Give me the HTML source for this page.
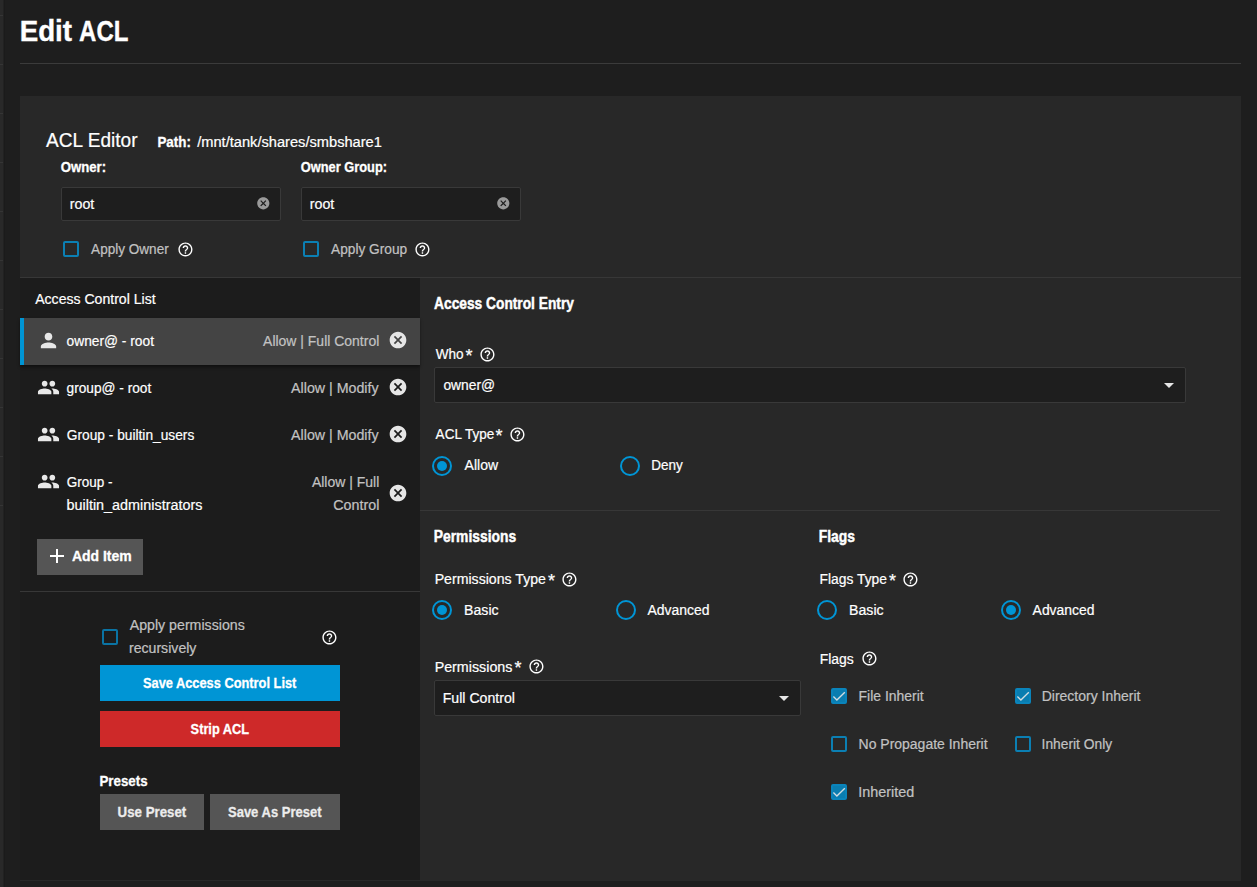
<!DOCTYPE html>
<html>
<head>
<meta charset="utf-8">
<title>Edit ACL</title>
<style>
*{box-sizing:border-box;margin:0;padding:0}
html,body{width:1257px;height:887px;overflow:hidden;background:#1e1e1e}
body{position:relative;font-family:"Liberation Sans",sans-serif;font-size:14px;color:#fff}
.abs{position:absolute}
.t{position:absolute;white-space:nowrap;line-height:1;transform-origin:0 0;-webkit-text-stroke:0.2px currentColor}
.b{font-weight:bold}
.strip{left:0;top:0;width:3px;height:887px;background:#292929;box-shadow:1px 0 0 #222,2px 0 0 #1b1b1b}
.strip i{position:absolute;left:0;width:3px;height:1px;background:#353535}
.card{left:20px;top:96px;width:1221px;height:785px;background:#282828}
.listbg{left:20px;top:278px;width:400px;height:603px;background:#1c1c1c}
.hline{height:1px;background:#373737}
.inp{background:#1e1e1e;border:1px solid #393939;border-radius:2px}
.cb{width:16px;height:16px;border:2px solid #0b7fb3;border-radius:2px}
.cb.on{background:#0a7db0;border-color:#0a84bb}
.radio{width:20px;height:20px;border:2px solid #0095d5;border-radius:50%}
.radio.on::after{content:"";position:absolute;left:3px;top:3px;width:10px;height:10px;border-radius:50%;background:#0095d5}
svg{position:absolute;overflow:visible}
</style>
</head>
<body>
<div class="abs strip"><i style="top:15px"></i><i style="top:64px"></i><i style="top:113px"></i><i style="top:162px"></i><i style="top:211px"></i><i style="top:260px"></i><i style="top:309px"></i><i style="top:358px"></i><i style="top:407px"></i><i style="top:456px"></i><i style="top:505px"></i></div>
<div class="t b" style="left:19px;top:17px;font-size:29px;color:#fff;transform:translateX(0.69px) scaleX(0.9557);-webkit-text-stroke:0.35px #fff">Edit</div>
<div class="t b" style="left:79px;top:17px;font-size:29px;color:#fff;transform:translateX(0.09px) scaleX(0.8272);-webkit-text-stroke:0.35px #fff">ACL</div>
<div class="abs hline" style="left:20px;top:63px;width:1221px;background:#3b3b3b"></div>
<div class="abs card"></div>
<div class="abs listbg"></div>
<div class="abs hline" style="left:20px;top:277px;width:1221px"></div>
<div class="t" style="left:46px;top:131px;font-size:19.5px;color:#fff;transform:translateX(0.10px) scaleX(0.9765)">ACL Editor</div>
<div class="t b" style="left:157px;top:134px;font-size:15px;color:#fff;transform:translateX(0.43px) scaleX(0.8924);-webkit-text-stroke:0.3px #fff">Path:</div>
<div class="t" style="left:197px;top:135px;font-size:14px;color:#fff;transform:translateX(0.20px) scaleX(1.0456)">/mnt/tank/shares/smbshare1</div>
<div class="t b" style="left:60px;top:159px;font-size:15px;color:#fff;transform:translateX(0.65px) scaleX(0.879);-webkit-text-stroke:0.3px #fff">Owner:</div>
<div class="t b" style="left:300px;top:159px;font-size:15px;color:#fff;transform:translateX(0.67px) scaleX(0.8563);-webkit-text-stroke:0.3px #fff">Owner Group:</div>
<div class="abs inp" style="left:61px;top:187px;width:220px;height:34px"></div>
<div class="abs inp" style="left:301px;top:187px;width:220px;height:34px"></div>
<div class="t" style="left:69px;top:197px;font-size:14px;color:#fff;transform:translateX(0.73px) scaleX(1.018)">root</div>
<div class="t" style="left:309px;top:197px;font-size:14px;color:#fff;transform:translateX(0.73px) scaleX(1.018)">root</div>
<svg style="left:256.00px;top:196.40px" width="14.6" height="14.6" viewBox="0 0 24 24"><path fill="#9a9a9a" d="M12 2C6.47 2 2 6.47 2 12s4.47 10 10 10 10-4.47 10-10S17.53 2 12 2zm5 13.59L15.59 17 12 13.41 8.41 17 7 15.59 10.59 12 7 8.41 8.41 7 12 10.59 15.59 7 17 8.41 13.41 12 17 15.59z"/></svg>
<svg style="left:496.00px;top:196.40px" width="14.6" height="14.6" viewBox="0 0 24 24"><path fill="#9a9a9a" d="M12 2C6.47 2 2 6.47 2 12s4.47 10 10 10 10-4.47 10-10S17.53 2 12 2zm5 13.59L15.59 17 12 13.41 8.41 17 7 15.59 10.59 12 7 8.41 8.41 7 12 10.59 15.59 7 17 8.41 13.41 12 17 15.59z"/></svg>
<div class="abs cb" style="left:63px;top:241px;border-color:#0b7fb3"></div>
<div class="abs cb" style="left:303px;top:241px;border-color:#0b7fb3"></div>
<div class="t" style="left:91px;top:242px;font-size:14px;color:#c2c2c2;transform:translateX(0.08px) scaleX(0.9687)">Apply Owner</div>
<div class="t" style="left:331px;top:242px;font-size:14px;color:#c2c2c2;transform:translateX(0.08px) scaleX(0.9777)">Apply Group</div>
<svg style="left:176.65px;top:240.50px" width="16.9" height="16.9" viewBox="0 0 24 24"><path fill="#fff" d="M11 18h2v-2h-2v2zm1-16C6.48 2 2 6.48 2 12s4.48 10 10 10 10-4.48 10-10S17.52 2 12 2zm0 18c-4.41 0-8-3.59-8-8s3.59-8 8-8 8 3.59 8 8-3.59 8-8 8zm0-14c-2.21 0-4 1.79-4 4h2c0-1.1.9-2 2-2s2 .9 2 2c0 2-3 1.75-3 5h2c0-2.25 3-2.5 3-5 0-2.21-1.79-4-4-4z"/></svg>
<svg style="left:414.25px;top:240.50px" width="16.9" height="16.9" viewBox="0 0 24 24"><path fill="#fff" d="M11 18h2v-2h-2v2zm1-16C6.48 2 2 6.48 2 12s4.48 10 10 10 10-4.48 10-10S17.52 2 12 2zm0 18c-4.41 0-8-3.59-8-8s3.59-8 8-8 8 3.59 8 8-3.59 8-8 8zm0-14c-2.21 0-4 1.79-4 4h2c0-1.1.9-2 2-2s2 .9 2 2c0 2-3 1.75-3 5h2c0-2.25 3-2.5 3-5 0-2.21-1.79-4-4-4z"/></svg>
<div class="t" style="left:35px;top:292px;font-size:14px;color:#fff;transform:translateX(0.18px) scaleX(1.0051)">Access Control List</div>
<div class="abs" style="left:20px;top:318px;width:400px;height:47px;background:#444;box-shadow:0 2px 3px rgba(0,0,0,.45)"></div>
<div class="abs" style="left:20px;top:318px;width:4px;height:47px;background:#0095d5"></div>
<svg style="left:37px;top:329px" width="23" height="23" viewBox="0 0 24 24"><path fill="#e8e8e8" d="M12 12c2.21 0 4-1.79 4-4s-1.79-4-4-4-4 1.79-4 4 1.79 4 4 4zm0 2c-2.67 0-8 1.34-8 4v2h16v-2c0-2.66-5.33-4-8-4z"/></svg>
<svg style="left:37px;top:376px" width="23" height="23" viewBox="0 0 24 24"><path fill="#e8e8e8" d="M16 11c1.66 0 2.99-1.34 2.99-3S17.66 5 16 5c-1.66 0-3 1.34-3 3s1.34 3 3 3zm-8 0c1.66 0 2.99-1.34 2.99-3S9.66 5 8 5C6.34 5 5 6.34 5 8s1.34 3 3 3zm0 2c-2.33 0-7 1.17-7 3.5V19h14v-2.5c0-2.33-4.67-3.5-7-3.5zm8 0c-.29 0-.62.02-.97.05 1.16.84 1.97 1.97 1.97 3.45V19h6v-2.5c0-2.33-4.67-3.5-7-3.5z"/></svg>
<svg style="left:37px;top:423px" width="23" height="23" viewBox="0 0 24 24"><path fill="#e8e8e8" d="M16 11c1.66 0 2.99-1.34 2.99-3S17.66 5 16 5c-1.66 0-3 1.34-3 3s1.34 3 3 3zm-8 0c1.66 0 2.99-1.34 2.99-3S9.66 5 8 5C6.34 5 5 6.34 5 8s1.34 3 3 3zm0 2c-2.33 0-7 1.17-7 3.5V19h14v-2.5c0-2.33-4.67-3.5-7-3.5zm8 0c-.29 0-.62.02-.97.05 1.16.84 1.97 1.97 1.97 3.45V19h6v-2.5c0-2.33-4.67-3.5-7-3.5z"/></svg>
<svg style="left:37px;top:470px" width="23" height="23" viewBox="0 0 24 24"><path fill="#e8e8e8" d="M16 11c1.66 0 2.99-1.34 2.99-3S17.66 5 16 5c-1.66 0-3 1.34-3 3s1.34 3 3 3zm-8 0c1.66 0 2.99-1.34 2.99-3S9.66 5 8 5C6.34 5 5 6.34 5 8s1.34 3 3 3zm0 2c-2.33 0-7 1.17-7 3.5V19h14v-2.5c0-2.33-4.67-3.5-7-3.5zm8 0c-.29 0-.62.02-.97.05 1.16.84 1.97 1.97 1.97 3.45V19h6v-2.5c0-2.33-4.67-3.5-7-3.5z"/></svg>
<div class="t" style="left:66px;top:334px;font-size:14px;color:#fff;transform:translateX(0.57px) scaleX(0.9833)">owner@ - root</div>
<div class="t" style="left:263px;top:334px;font-size:14px;color:#c2c2c2;transform:translateX(0.08px) scaleX(0.9976)">Allow | Full Control</div>
<div class="t" style="left:66px;top:381px;font-size:14px;color:#fff;transform:translateX(0.55px) scaleX(0.9781)">group@ - root</div>
<div class="t" style="left:291px;top:381px;font-size:14px;color:#c2c2c2;transform:translateX(0.09px) scaleX(1.0155)">Allow | Modify</div>
<div class="t" style="left:66px;top:428px;font-size:14px;color:#fff;transform:translateX(0.76px) scaleX(0.9814)">Group - builtin_users</div>
<div class="t" style="left:291px;top:428px;font-size:14px;color:#c2c2c2;transform:translateX(0.09px) scaleX(1.0155)">Allow | Modify</div>
<div class="t" style="left:66px;top:475px;font-size:14px;color:#fff;transform:translateX(0.77px) scaleX(0.964)">Group -</div>
<div class="t" style="left:66px;top:498px;font-size:14px;color:#fff;transform:translateX(0.50px) scaleX(1.0277)">builtin_administrators</div>
<div class="t" style="left:311px;top:475px;font-size:14px;color:#c2c2c2;transform:translateX(0.89px) scaleX(0.9989)">Allow | Full</div>
<div class="t" style="left:333px;top:498px;font-size:14px;color:#c2c2c2;transform:translateX(0.30px) scaleX(1.0196)">Control</div>
<svg style="left:388.10px;top:330.00px" width="20" height="20" viewBox="0 0 24 24"><path fill="#e6e6e6" d="M12 2C6.47 2 2 6.47 2 12s4.47 10 10 10 10-4.47 10-10S17.53 2 12 2zm5 13.59L15.59 17 12 13.41 8.41 17 7 15.59 10.59 12 7 8.41 8.41 7 12 10.59 15.59 7 17 8.41 13.41 12 17 15.59z"/></svg>
<svg style="left:388.10px;top:377.00px" width="20" height="20" viewBox="0 0 24 24"><path fill="#e6e6e6" d="M12 2C6.47 2 2 6.47 2 12s4.47 10 10 10 10-4.47 10-10S17.53 2 12 2zm5 13.59L15.59 17 12 13.41 8.41 17 7 15.59 10.59 12 7 8.41 8.41 7 12 10.59 15.59 7 17 8.41 13.41 12 17 15.59z"/></svg>
<svg style="left:388.10px;top:424.00px" width="20" height="20" viewBox="0 0 24 24"><path fill="#e6e6e6" d="M12 2C6.47 2 2 6.47 2 12s4.47 10 10 10 10-4.47 10-10S17.53 2 12 2zm5 13.59L15.59 17 12 13.41 8.41 17 7 15.59 10.59 12 7 8.41 8.41 7 12 10.59 15.59 7 17 8.41 13.41 12 17 15.59z"/></svg>
<svg style="left:388.10px;top:483.00px" width="20" height="20" viewBox="0 0 24 24"><path fill="#e6e6e6" d="M12 2C6.47 2 2 6.47 2 12s4.47 10 10 10 10-4.47 10-10S17.53 2 12 2zm5 13.59L15.59 17 12 13.41 8.41 17 7 15.59 10.59 12 7 8.41 8.41 7 12 10.59 15.59 7 17 8.41 13.41 12 17 15.59z"/></svg>
<div class="abs" style="left:37px;top:539px;width:106px;height:36px;background:#555"></div>
<svg style="left:45px;top:544.4px" width="24" height="24" viewBox="0 0 24 24"><path fill="#fff" d="M19 13h-6v6h-2v-6H5v-2h6V5h2v6h6v2z"/></svg>
<div class="t b" style="left:71px;top:548px;font-size:15px;color:#fff;transform:translateX(0.89px) scaleX(0.9315);-webkit-text-stroke:0.3px #fff">Add Item</div>
<div class="abs hline" style="left:20px;top:591px;width:400px"></div>
<div class="abs cb" style="left:102px;top:629px;border-color:#0a73a3"></div>
<div class="t" style="left:129px;top:618px;font-size:14px;color:#c2c2c2;transform:translateX(0.69px) scaleX(1.013)">Apply permissions</div>
<div class="t" style="left:128px;top:641px;font-size:14px;color:#c2c2c2;transform:translateX(0.95px) scaleX(1.0087)">recursively</div>
<svg style="left:320.65px;top:628.60px" width="16.9" height="16.9" viewBox="0 0 24 24"><path fill="#fff" d="M11 18h2v-2h-2v2zm1-16C6.48 2 2 6.48 2 12s4.48 10 10 10 10-4.48 10-10S17.52 2 12 2zm0 18c-4.41 0-8-3.59-8-8s3.59-8 8-8 8 3.59 8 8-3.59 8-8 8zm0-14c-2.21 0-4 1.79-4 4h2c0-1.1.9-2 2-2s2 .9 2 2c0 2-3 1.75-3 5h2c0-2.25 3-2.5 3-5 0-2.21-1.79-4-4-4z"/></svg>
<div class="abs" style="left:100px;top:665px;width:240px;height:36px;background:#0095d5"></div>
<div class="t b" style="left:142px;top:675px;font-size:15px;color:#fff;transform:translateX(0.97px) scaleX(0.8544);-webkit-text-stroke:0.3px #fff">Save Access Control List</div>
<div class="abs" style="left:100px;top:711px;width:240px;height:36px;background:#ce2929"></div>
<div class="t b" style="left:190px;top:721px;font-size:15px;color:#fff;transform:translateX(0.62px) scaleX(0.8517);-webkit-text-stroke:0.3px #fff">Strip ACL</div>
<div class="t b" style="left:99px;top:773px;font-size:15px;color:#fff;transform:translateX(0.41px) scaleX(0.8893);-webkit-text-stroke:0.3px #fff">Presets</div>
<div class="abs" style="left:100px;top:794px;width:104px;height:36px;background:#555"></div>
<div class="t b" style="left:117px;top:804px;font-size:15px;color:#ececec;transform:translateX(0.58px) scaleX(0.8854);-webkit-text-stroke:0.3px #ececec">Use Preset</div>
<div class="abs" style="left:210px;top:794px;width:130px;height:36px;background:#555"></div>
<div class="t b" style="left:227px;top:804px;font-size:15px;color:#ececec;transform:translateX(0.97px) scaleX(0.8675);-webkit-text-stroke:0.3px #ececec">Save As Preset</div>
<div class="abs hline" style="left:20px;top:880px;width:400px;background:#282828"></div>
<div class="t b" style="left:434px;top:296px;font-size:16px;color:#fff;transform:translateX(0.09px) scaleX(0.8593);-webkit-text-stroke:0.45px #fff">Access Control Entry</div>
<div class="t" style="left:435px;top:347px;font-size:14px;color:#fff;transform:translateX(0.80px) scaleX(0.9669)">Who</div>
<div class="t ast" style="left:465.6px;top:347px;font-size:18px">*</div>
<svg style="left:478.85px;top:345.50px" width="16.9" height="16.9" viewBox="0 0 24 24"><path fill="#fff" d="M11 18h2v-2h-2v2zm1-16C6.48 2 2 6.48 2 12s4.48 10 10 10 10-4.48 10-10S17.52 2 12 2zm0 18c-4.41 0-8-3.59-8-8s3.59-8 8-8 8 3.59 8 8-3.59 8-8 8zm0-14c-2.21 0-4 1.79-4 4h2c0-1.1.9-2 2-2s2 .9 2 2c0 2-3 1.75-3 5h2c0-2.25 3-2.5 3-5 0-2.21-1.79-4-4-4z"/></svg>
<div class="abs inp" style="left:434px;top:367px;width:752px;height:36px"></div>
<div class="t" style="left:443px;top:378px;font-size:14px;color:#fff;transform:translateX(0.38px) scaleX(0.9871)">owner@</div>
<div class="abs" style="left:1164px;top:383.0px;width:0;height:0;border-left:5px solid transparent;border-right:5px solid transparent;border-top:5px solid #e6e6e6"></div>
<div class="t" style="left:435px;top:427px;font-size:14px;color:#fff;transform:translateX(0.62px) scaleX(0.9644)">ACL Type</div>
<div class="t ast" style="left:495.6px;top:427px;font-size:18px">*</div>
<svg style="left:509.45px;top:426.00px" width="16.9" height="16.9" viewBox="0 0 24 24"><path fill="#fff" d="M11 18h2v-2h-2v2zm1-16C6.48 2 2 6.48 2 12s4.48 10 10 10 10-4.48 10-10S17.52 2 12 2zm0 18c-4.41 0-8-3.59-8-8s3.59-8 8-8 8 3.59 8 8-3.59 8-8 8zm0-14c-2.21 0-4 1.79-4 4h2c0-1.1.9-2 2-2s2 .9 2 2c0 2-3 1.75-3 5h2c0-2.25 3-2.5 3-5 0-2.21-1.79-4-4-4z"/></svg>
<div class="abs radio on" style="left:432px;top:456px"></div>
<div class="t" style="left:464px;top:458px;font-size:14px;color:#fff;transform:translateX(0.61px) scaleX(1.0013)">Allow</div>
<div class="abs radio" style="left:620px;top:456px"></div>
<div class="t" style="left:651px;top:458px;font-size:14px;color:#fff;transform:translateX(0.13px) scaleX(0.9643)">Deny</div>
<div class="abs hline" style="left:420px;top:510px;width:800px"></div>
<div class="t b" style="left:433px;top:529px;font-size:16px;color:#fff;transform:translateX(0.74px) scaleX(0.8664);-webkit-text-stroke:0.45px #fff">Permissions</div>
<div class="t" style="left:434px;top:572px;font-size:14px;color:#fff;transform:translateX(0.65px) scaleX(1.0099)">Permissions Type</div>
<div class="t ast" style="left:547.9px;top:572px;font-size:18px">*</div>
<svg style="left:560.85px;top:570.50px" width="16.9" height="16.9" viewBox="0 0 24 24"><path fill="#fff" d="M11 18h2v-2h-2v2zm1-16C6.48 2 2 6.48 2 12s4.48 10 10 10 10-4.48 10-10S17.52 2 12 2zm0 18c-4.41 0-8-3.59-8-8s3.59-8 8-8 8 3.59 8 8-3.59 8-8 8zm0-14c-2.21 0-4 1.79-4 4h2c0-1.1.9-2 2-2s2 .9 2 2c0 2-3 1.75-3 5h2c0-2.25 3-2.5 3-5 0-2.21-1.79-4-4-4z"/></svg>
<div class="abs radio on" style="left:432px;top:600px"></div>
<div class="t" style="left:464px;top:603px;font-size:14px;color:#fff;transform:translateX(0.05px) scaleX(1.0098)">Basic</div>
<div class="abs radio" style="left:616px;top:600px"></div>
<div class="t" style="left:647px;top:603px;font-size:14px;color:#fff;transform:translateX(0.55px) scaleX(0.9957)">Advanced</div>
<div class="t" style="left:434px;top:660px;font-size:14px;color:#fff;transform:translateX(0.64px) scaleX(1.0203)">Permissions</div>
<div class="t ast" style="left:514.5px;top:659px;font-size:18px">*</div>
<svg style="left:527.95px;top:658.20px" width="16.9" height="16.9" viewBox="0 0 24 24"><path fill="#fff" d="M11 18h2v-2h-2v2zm1-16C6.48 2 2 6.48 2 12s4.48 10 10 10 10-4.48 10-10S17.52 2 12 2zm0 18c-4.41 0-8-3.59-8-8s3.59-8 8-8 8 3.59 8 8-3.59 8-8 8zm0-14c-2.21 0-4 1.79-4 4h2c0-1.1.9-2 2-2s2 .9 2 2c0 2-3 1.75-3 5h2c0-2.25 3-2.5 3-5 0-2.21-1.79-4-4-4z"/></svg>
<div class="abs inp" style="left:434px;top:680px;width:367px;height:36px"></div>
<div class="t" style="left:442px;top:691px;font-size:14px;color:#fff;transform:translateX(0.72px) scaleX(1.0092)">Full Control</div>
<div class="abs" style="left:779px;top:696.0px;width:0;height:0;border-left:5px solid transparent;border-right:5px solid transparent;border-top:5px solid #e6e6e6"></div>
<div class="t b" style="left:818px;top:529px;font-size:16px;color:#fff;transform:translateX(0.77px) scaleX(0.8672);-webkit-text-stroke:0.45px #fff">Flags</div>
<div class="t" style="left:819px;top:572px;font-size:14px;color:#fff;transform:translateX(0.56px) scaleX(0.9887)">Flags Type</div>
<div class="t ast" style="left:888.9px;top:572px;font-size:18px">*</div>
<svg style="left:902.35px;top:570.50px" width="16.9" height="16.9" viewBox="0 0 24 24"><path fill="#fff" d="M11 18h2v-2h-2v2zm1-16C6.48 2 2 6.48 2 12s4.48 10 10 10 10-4.48 10-10S17.52 2 12 2zm0 18c-4.41 0-8-3.59-8-8s3.59-8 8-8 8 3.59 8 8-3.59 8-8 8zm0-14c-2.21 0-4 1.79-4 4h2c0-1.1.9-2 2-2s2 .9 2 2c0 2-3 1.75-3 5h2c0-2.25 3-2.5 3-5 0-2.21-1.79-4-4-4z"/></svg>
<div class="abs radio" style="left:817px;top:600px"></div>
<div class="t" style="left:849px;top:603px;font-size:14px;color:#fff;transform:translateX(0.05px) scaleX(1.0098)">Basic</div>
<div class="abs radio on" style="left:1001px;top:600px"></div>
<div class="t" style="left:1032px;top:603px;font-size:14px;color:#fff;transform:translateX(0.61px) scaleX(0.993)">Advanced</div>
<div class="t" style="left:819px;top:652px;font-size:14px;color:#fff;transform:translateX(0.72px) scaleX(0.995)">Flags</div>
<svg style="left:861.15px;top:650.30px" width="16.9" height="16.9" viewBox="0 0 24 24"><path fill="#fff" d="M11 18h2v-2h-2v2zm1-16C6.48 2 2 6.48 2 12s4.48 10 10 10 10-4.48 10-10S17.52 2 12 2zm0 18c-4.41 0-8-3.59-8-8s3.59-8 8-8 8 3.59 8 8-3.59 8-8 8zm0-14c-2.21 0-4 1.79-4 4h2c0-1.1.9-2 2-2s2 .9 2 2c0 2-3 1.75-3 5h2c0-2.25 3-2.5 3-5 0-2.21-1.79-4-4-4z"/></svg>
<div class="abs cb on" style="left:831px;top:688px"></div><svg style="left:831px;top:688px" width="16" height="16" viewBox="0 0 16 16"><path d="M2.4 8.6 L5.9 12.1 L13.8 4.2" fill="none" stroke="#d2dde2" stroke-width="1.35"/></svg>
<div class="t" style="left:858px;top:689px;font-size:14px;color:#c2c2c2;transform:translateX(0.54px) scaleX(0.9972)">File Inherit</div>
<div class="abs cb on" style="left:1015px;top:688px"></div><svg style="left:1015px;top:688px" width="16" height="16" viewBox="0 0 16 16"><path d="M2.4 8.6 L5.9 12.1 L13.8 4.2" fill="none" stroke="#d2dde2" stroke-width="1.35"/></svg>
<div class="t" style="left:1041px;top:689px;font-size:14px;color:#c2c2c2;transform:translateX(0.72px) scaleX(0.9988)">Directory Inherit</div>
<div class="abs cb" style="left:831px;top:736px;border-color:#0b7fb3"></div>
<div class="t" style="left:858px;top:737px;font-size:14px;color:#c2c2c2;transform:translateX(0.54px) scaleX(0.9988)">No Propagate Inherit</div>
<div class="abs cb" style="left:1015px;top:736px;border-color:#0b7fb3"></div>
<div class="t" style="left:1041px;top:737px;font-size:14px;color:#c2c2c2;transform:translateX(0.59px) scaleX(0.9856)">Inherit Only</div>
<div class="abs cb on" style="left:831px;top:784px"></div><svg style="left:831px;top:784px" width="16" height="16" viewBox="0 0 16 16"><path d="M2.4 8.6 L5.9 12.1 L13.8 4.2" fill="none" stroke="#d2dde2" stroke-width="1.35"/></svg>
<div class="t" style="left:858px;top:785px;font-size:14px;color:#c2c2c2;transform:translateX(0.28px) scaleX(1.0275)">Inherited</div>
</body>
</html>
